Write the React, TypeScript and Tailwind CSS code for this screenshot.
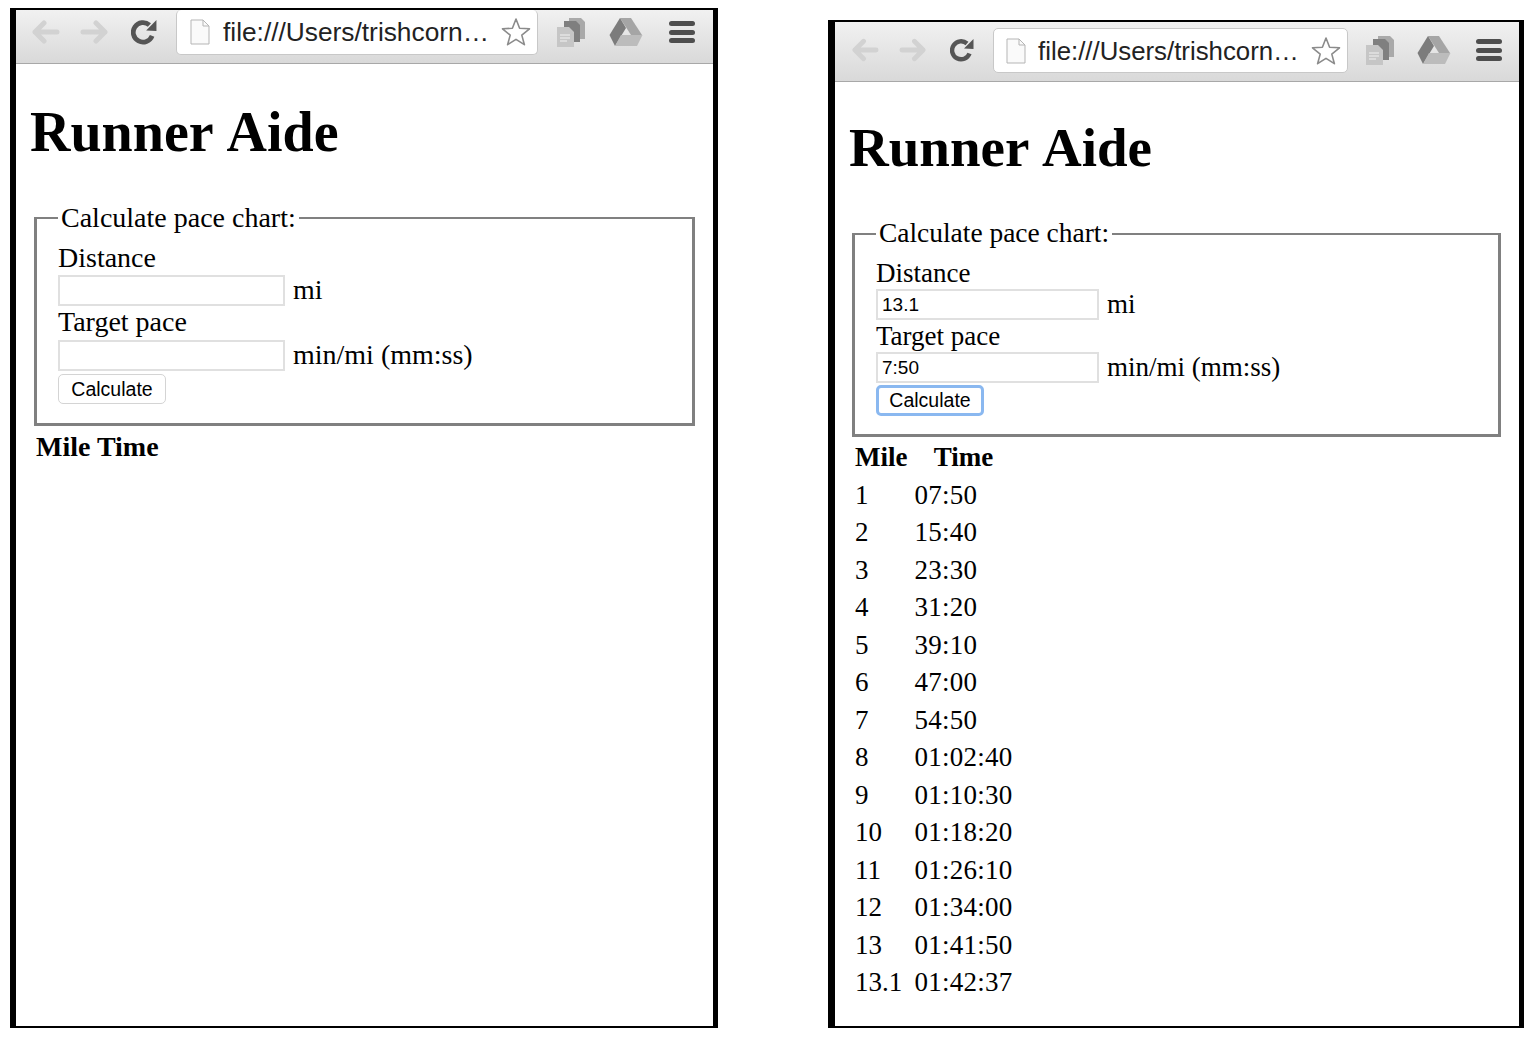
import React from 'react';

const serif = 'font-["Liberation_Serif",serif]';

const BackIcon = ({ className, flip }: { className: string; flip?: boolean }) => (
  <svg viewBox="0 0 28 24" className={className + (flip ? ' -scale-x-100' : '')} fill="none" stroke="#d2d2d2" strokeWidth="5" strokeLinecap="round" strokeLinejoin="round">
    <path d="M3 12h22M12 3l-9 9 9 9" />
  </svg>
);

const ReloadIcon = ({ className }: { className: string }) => (
  <svg viewBox="0 0 24 24" className={className} fill="none">
    <path d="M19.5 15.5A9 9 0 1 1 17 5.5" stroke="#555" strokeWidth="4.4" />
    <path d="M14 10.5 23.5 11V1z" fill="#555" />
  </svg>
);

const PageIcon = ({ className }: { className: string }) => (
  <svg viewBox="0 0 20 26" className={className} fill="#fafafa" stroke="#b5b5b5" strokeWidth="1">
    <path d="M1 1h12l6 6v18H1z" />
    <path d="M13 1v6h6" fill="none" />
  </svg>
);

const StarIcon = ({ className }: { className: string }) => (
  <svg viewBox="0 0 30 30" className={className} fill="#fff" stroke="#8b8b8b" strokeWidth="1.6" strokeLinejoin="round">
    <path d="M15 2l3.6 9.2 9.9.6-7.7 6.3 2.6 9.6L15 22.3l-8.4 5.4 2.6-9.6-7.7-6.3 9.9-.6z" />
  </svg>
);

const DocsIcon = ({ className }: { className: string }) => (
  <svg viewBox="0 0 30 30" className={className}>
    <path d="M13 1h12l4 4v17H13z" fill="#a9a9a9" />
    <path d="M8 4h12l4 4v17H8z" fill="#7f7f7f" />
    <path d="M1 10h12l5 5v15H1z" fill="#c6c6c6" />
    <path d="M4 18h10M4 21h10M4 24h7" stroke="#e4e4e4" strokeWidth="1.4" />
  </svg>
);

const DriveIcon = ({ className }: { className: string }) => (
  <svg viewBox="0 0 34 30" className={className}>
    <path d="M11 1h11L33 18h-11z" fill="#a5a5a5" />
    <path d="M11 1 0.5 18l5.5 11L17 11z" fill="#7c7c7c" />
    <path d="M6 29h22l5.500-11H12z" fill="#bcbcbc" />
  </svg>
);

const MenuIcon = ({ className }: { className: string }) => (
  <div className={'flex flex-col justify-between ' + className}>
    <div className="h-[5px] rounded-full bg-[#4e4e4e]" />
    <div className="h-[5px] rounded-full bg-[#4e4e4e]" />
    <div className="h-[5px] rounded-full bg-[#4e4e4e]" />
  </div>
);

const rows = [
  ['1', '07:50'],
  ['2', '15:40'],
  ['3', '23:30'],
  ['4', '31:20'],
  ['5', '39:10'],
  ['6', '47:00'],
  ['7', '54:50'],
  ['8', '01:02:40'],
  ['9', '01:10:30'],
  ['10', '01:18:20'],
  ['11', '01:26:10'],
  ['12', '01:34:00'],
  ['13', '01:41:50'],
  ['13.1', '01:42:37'],
];

const App = () => {
  return (
    <div className={'flex items-start bg-white h-[1038px] pl-[10px] text-black ' + serif}>
      {/* empty state */}
      <div className="mt-[8px] w-[708px] h-[1020px] border-t-2 border-b-2 border-l-[6px] border-r-[5px] border-black">
        <div className="flex items-start h-[54px] bg-gradient-to-b from-[#f1f1f1] to-[#d9d9d9] border-b border-[#a8a8a8]">
          <BackIcon className="w-[28px] h-[24px] ml-[16px] mt-[10px]" />
          <BackIcon flip className="w-[28px] h-[24px] ml-[20px] mt-[10px]" />
          <ReloadIcon className="w-[26px] h-[26px] ml-[23px] mt-[9px]" />
          <div className="flex items-center w-[362px] h-[45px] ml-[19px] bg-white rounded-[5px] border border-t-0 border-[#c8c8c8] font-['Liberation_Sans',sans-serif]">
            <PageIcon className="w-[20px] h-[26px] ml-[13px]" />
            <span className="ml-[13px] pt-[2px] text-[26.300px] text-[#222] whitespace-nowrap">file:///Users/trishcorn…</span>
            <StarIcon className="w-[30px] h-[30px] ml-[12px]" />
          </div>
          <DocsIcon className="w-[30px] h-[30px] ml-[18px] mt-[7px]" />
          <DriveIcon className="w-[34px] h-[30px] ml-[23px] mt-[7px]" />
          <MenuIcon className="w-[26px] h-[22px] ml-[26px] mt-[11px]" />
        </div>
        <h1 className="ml-[14px] mt-[33px] text-[56px] leading-[70px] font-bold whitespace-nowrap [word-spacing:3px]">Runner Aide</h1>
        <fieldset className="ml-[18px] mt-[35px] w-[661px] h-[224px] border-[3px] border-t-2 border-[#808080] pl-[21px] text-[28px] leading-[32px]">
          <legend className="px-[3px] mb-[8px] text-[28px]">Calculate pace chart:</legend>
          <div className="h-[32px]">Distance</div>
          <div className="flex items-center h-[32px]">
            <input readOnly className="w-[227px] h-[31px] border-2 border-[#e0e0e0] bg-white" />
            <span className="ml-[8px]">mi</span>
          </div>
          <div className="h-[33px]">Target pace</div>
          <div className="flex items-center h-[32px]">
            <input readOnly className="w-[227px] h-[31px] border-2 border-[#e0e0e0] bg-white" />
            <span className="ml-[8px]">min/mi (mm:ss)</span>
          </div>
          <button className="mt-[3px] block w-[108px] h-[30px] rounded-[5px] border border-[#d4d4d4] bg-white text-[19.500px] leading-[26px] font-['Liberation_Sans',sans-serif]">Calculate</button>
        </fieldset>
        <div className="ml-[20px] mt-[5px] text-[28px] leading-[32px] font-bold">Mile Time</div>
      </div>

      {/* results state */}
      <div className="mt-[20px] ml-[110px] w-[696px] h-[1008px] border-t-2 border-b-2 border-l-[7px] border-r-[5px] border-black">
        <div className="flex items-start h-[60px] bg-gradient-to-b from-[#f1f1f1] to-[#d9d9d9] border-b border-[#a8a8a8]">
          <BackIcon className="w-[27px] h-[24px] ml-[17px] mt-[16px]" />
          <BackIcon flip className="w-[27px] h-[24px] ml-[20px] mt-[16px]" />
          <ReloadIcon className="w-[24px] h-[24px] ml-[24px] mt-[16px]" />
          <div className="flex items-center w-[355px] h-[45px] ml-[19px] mt-[6px] bg-white rounded-[5px] border border-[#c8c8c8] font-['Liberation_Sans',sans-serif]">
            <PageIcon className="w-[20px] h-[26px] ml-[12px]" />
            <span className="ml-[12px] pt-[2px] text-[25.800px] text-[#222] whitespace-nowrap">file:///Users/trishcorn…</span>
            <StarIcon className="w-[30px] h-[30px] ml-[12px]" />
          </div>
          <DocsIcon className="w-[30px] h-[30px] ml-[17px] mt-[13px]" />
          <DriveIcon className="w-[34px] h-[30px] ml-[22px] mt-[13px]" />
          <MenuIcon className="w-[26px] h-[22px] ml-[25px] mt-[17px]" />
        </div>
        <h1 className="ml-[14px] mt-[32px] text-[55px] leading-[68px] font-bold whitespace-nowrap [word-spacing:3px]">Runner Aide</h1>
        <fieldset className="ml-[17px] mt-[36px] w-[649px] h-[219px] border-[3px] border-t-2 border-[#808080] pl-[21px] text-[27px] leading-[31.500px]">
          <legend className="px-[3px] mb-[8px] text-[27.450px]">Calculate pace chart:</legend>
          <div className="h-[31px]">Distance</div>
          <div className="flex items-center h-[32px]">
            <input readOnly value="13.1" className="w-[223px] h-[31px] border-2 border-[#e0e0e0] bg-white pl-[4px] pt-[1px] text-[19px] font-['Liberation_Sans',sans-serif]" />
            <span className="ml-[8px]">mi</span>
          </div>
          <div className="h-[31px]">Target pace</div>
          <div className="flex items-center h-[32px]">
            <input readOnly value="7:50" className="w-[223px] h-[31px] border-2 border-[#e0e0e0] bg-white pl-[4px] pt-[1px] text-[19px] font-['Liberation_Sans',sans-serif]" />
            <span className="ml-[8px]">min/mi (mm:ss)</span>
          </div>
          <button className="mt-[1px] block w-[108px] h-[31px] rounded-[5px] border-[3px] border-[#8ab8f0] bg-white text-[19.500px] leading-[24px] font-['Liberation_Sans',sans-serif]">Calculate</button>
        </fieldset>
        <table className="ml-[17px] mt-[2px] border-separate border-spacing-x-[3px] border-spacing-y-0 text-[27px] leading-[37.500px]">
          <thead>
            <tr>
              <th className="p-0 font-bold text-center">Mile</th>
              <th className="p-0 pl-[4px] font-bold text-center">Time</th>
            </tr>
          </thead>
          <tbody>
            {rows.map(row => (
              <tr key={row[0]}>
                <td className="p-0">{row[0]}</td>
                <td className="p-0 pl-[4px] tracking-[0.25px]">{row[1]}</td>
              </tr>
            ))}
          </tbody>
        </table>
      </div>
    </div>
  );
};

export default App;
